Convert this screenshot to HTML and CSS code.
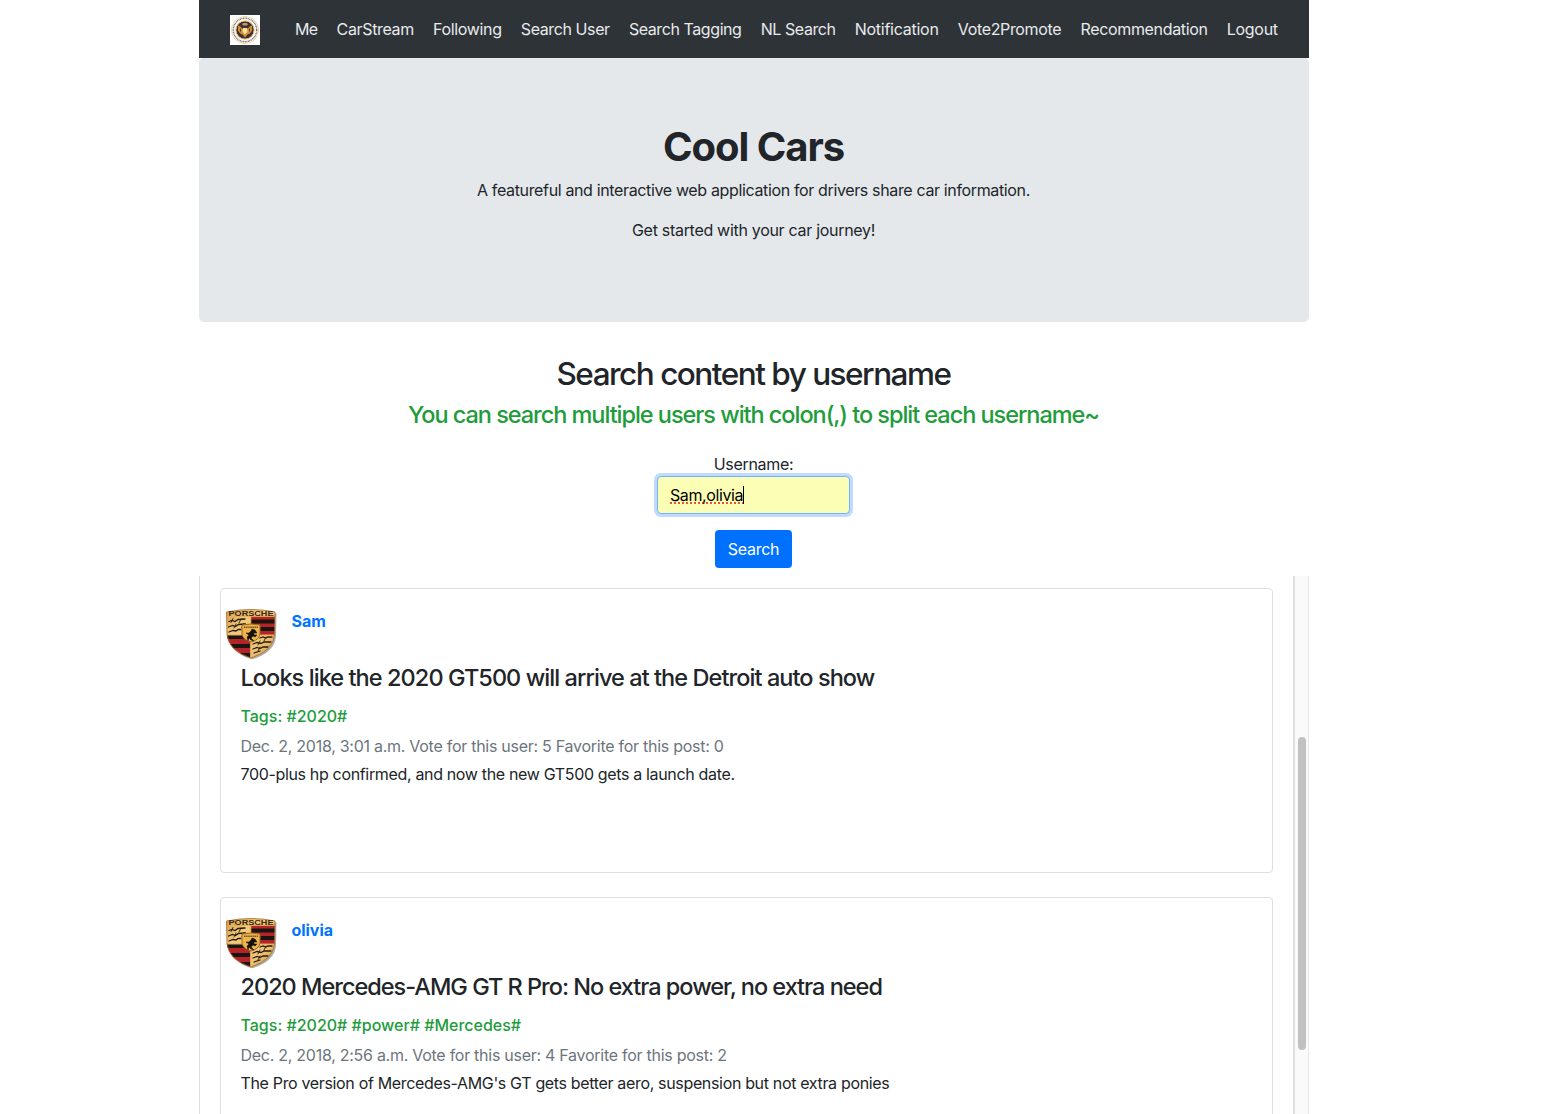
FILE: index.html
```html
<!DOCTYPE html>
<html lang="en">
<head>
<meta charset="utf-8">
<title>Cool Cars</title>
<link rel="stylesheet" href="styles.css">
</head>
<body>
<svg class="defs" aria-hidden="true">
  <defs>
    <linearGradient id="gold" x1="0" y1="0" x2="1" y2="1"><stop offset="0" stop-color="#d39a48"/><stop offset=".3" stop-color="#f0ca7c"/><stop offset=".7" stop-color="#edc47a"/><stop offset="1" stop-color="#c78a35"/></linearGradient>
    <clipPath id="shield"><path d="M.5 3Q25-2 49 3L48.500 26Q47 42 25 49Q3 42 1 26Z"/></clipPath>
    <symbol id="crest" viewBox="0 0 52 52">
      <path d="M2.500 4.500Q26 0 50.500 4.500L50 28Q48 44 26 50.300Q4 44 3 28Z" fill="#777" opacity=".6"/>
      <g clip-path="url(#shield)">
        <path fill="url(#gold)" d="M0 0h50v50H0z"/>
        <path fill="#b52227" d="M25 7.500h25V26H25zM0 26h24.500v24H0z"/>
        <path fill="#1b1511" d="M25 10.500h25v4H25zM25 18h25v4H25zM0 26h24.500v4H0zM0 35h24.500v4H0zM0 44h24.500v4H0z"/>
        <path d="M24.700 7v43M0 26h50M0 7.200h50" stroke="#e3ae58" stroke-width="1.200"/>
        <g fill="none" stroke="#2b1b0c" stroke-width="1.300" stroke-linecap="round">
          <path d="M3 12.500l3-1 3 1 3-2 7-.5M2.500 18l4-1.500 3 1 3-2 7-.5M3 23l4-1.500 3 .5 2-1.500 3 0"/>
          <path d="M34 29l3-1 3 1 2-1 4 0M27 35l4-1.500 4 1 3-1.500 7 0M27 40l4-1.500 3 1 3-1.500 5 0M28 44l3-1 3-1"/>
          <path d="M7 9.500l-2 4M15 10l-2 4M10 15l-2 4M18 14.500l-2 4M34 32l-2 4M40 28l-2 4M34 38l-2 4" stroke-width=".9"/>
        </g>
      </g>
      <path d="M.5 3Q25-2 49 3L48.500 26Q47 42 25 49Q3 42 1 26Z" fill="none" stroke="#a36b25" stroke-width=".8"/>
      <path d="M16 16Q25 14 34 16V25Q33 31 25 33Q17 31 16 25Z" fill="#edb34c" stroke="#9c6825"/>
      <path d="M18 18.200h14" stroke="#76501e" stroke-width="1.500" stroke-dasharray="1.500 .6"/>
      <path d="M26 20l3 1 2 3-3 0 0 2 3 0-2 2-2-1-2 2 3 3-3-1-2-2-1 3-1-4 2-2-3-2 3 0 2-2z" fill="#15110d" stroke="#15110d" stroke-width=".5"/>
      <text class="crest-name" x="25" y="6.600" textLength="45" lengthAdjust="spacingAndGlyphs">PORSCHE</text>
    </symbol>
  </defs>
</svg>
<div class="container">
  <nav class="navbar">
    <svg class="brand" viewBox="0 0 30 30">
      <path fill="#fff" d="M0 0h30v30H0z"/>
      <circle cx="15" cy="15" r="13.600" fill="#fffdf8" stroke="#eccb91" stroke-width=".8"/>
      <circle cx="15" cy="15" r="11.700" fill="none" stroke="#777378" stroke-width="1.500" stroke-dasharray="1 .6"/>
      <circle cx="15" cy="15" r="9.100" fill="#3b3038" stroke="#e9b75f" stroke-width="1"/>
      <path d="M8 10.500l2.500 1 2 2.500h5l2-2.500 2.500-1v5l-2 3-2.500 1-2.500 3-2.500-3-2.500-1-2-3z" fill="#d18e36"/>
      <path d="M12 9l1.500-1h3L18 9l-1 1.500h-4z" fill="#c99a53"/>
      <path d="M12.700 13h4.600v4L15 19.500 12.700 17z" fill="#ffdf92"/>
      <path d="M10.500 13.500v3M19.500 13.500v3" stroke="#5e3c2b" stroke-width="1"/>
    </svg>
    <ul class="links">
      <li class="n1">Me</li><li class="n2">CarStream</li><li class="n3">Following</li><li class="n4">Search User</li><li class="n5">Search Tagging</li><li class="n6">NL Search</li><li class="n7">Notification</li><li class="n8">Vote2Promote</li><li class="n9">Recommendation</li><li class="n10">Logout</li>
    </ul>
  </nav>
  <header class="jumbotron">
    <h1>Cool Cars</h1>
    <p class="lead">A featureful and interactive web application for drivers share car information.</p>
    <p class="start">Get started with your car journey!</p>
  </header>
  <section class="search">
    <h2>Search content by username</h2>
    <h4>You can search multiple users with colon(,) to split each username~</h4>
    <div class="label">Username:</div>
    <div class="field"><span class="typed">Sam,olivia</span><span class="caret"></span></div>
    <div class="button">Search</div>
  </section>
  <main class="feed">
    <div class="posts">
      <article class="card">
        <div class="author"><svg class="avatar"><use href="#crest"/></svg><strong class="user">Sam</strong></div>
        <h3 class="t1">Looks like the 2020 GT500 will arrive at the Detroit auto show</h3>
        <div class="tags">Tags: #2020#</div>
        <div class="meta">Dec. 2, 2018, 3:01 a.m. Vote for this user: 5 Favorite for this post: 0</div>
        <div class="text">700-plus hp confirmed, and now the new GT500 gets a launch date.</div>
      </article>
      <article class="card">
        <div class="author"><svg class="avatar"><use href="#crest"/></svg><strong class="user">olivia</strong></div>
        <h3 class="t2">2020 Mercedes-AMG GT R Pro: No extra power, no extra need</h3>
        <div class="tags">Tags: #2020# #power# #Mercedes#</div>
        <div class="meta">Dec. 2, 2018, 2:56 a.m. Vote for this user: 4 Favorite for this post: 2</div>
        <div class="text">The Pro version of Mercedes-AMG's GT gets better aero, suspension but not extra ponies</div>
      </article>
    </div>
    <div class="track"><div class="thumb"></div></div>
  </main>
</div>
</body>
</html>
```
FILE: styles.css
```css
* { box-sizing: border-box; }
body { margin: 0; height: 1114px; overflow: hidden; padding-right: 54px; background: #fff; color: #212529; font: 16px/24px Inter, "Liberation Sans", sans-serif; letter-spacing: -0.3px; white-space: nowrap; }
h1, h2, h3, h4, p, ul { margin: 0; padding: 0; }
.defs { display: block; width: 0; height: 0; }
.crest-name { font: bold 6.5px "Liberation Sans", sans-serif; letter-spacing: 0; text-anchor: middle; fill: #3a2610; }
.container { width: 1110px; height: 1114px; margin: 0 auto; display: flex; flex-direction: column; }
.navbar { height: 58px; flex: none; background: #2e3338; display: flex; align-items: center; padding: 0 31px; }
.brand { width: 30px; height: 30px; margin: 1px 35px 0 0; flex: none; }
.links { display: flex; gap: 19.2px; list-style: none; color: #e8eaec; }
.n1 { letter-spacing: -0.7px; }
.n2, .n3 { letter-spacing: -0.35px; }
.n4 { letter-spacing: -0.4px; }
.n5 { letter-spacing: -0.42px; }
.n6 { letter-spacing: -0.43px; }
.n7 { letter-spacing: -0.26px; }
.n8, .n9 { letter-spacing: -0.34px; }
.jumbotron { height: 264px; flex: none; background: #e4e8eb; border-radius: 5px; padding: 65px 1px 0 0; text-align: center; }
h1 { font-size: 40px; line-height: 48px; font-weight: 700; letter-spacing: -1.05px; }
.lead { margin-top: 7px; letter-spacing: -0.357px; }
.start { margin-top: 16px; }
.search { height: 254px; flex: none; display: flex; flex-direction: column; align-items: center; padding: 33px 1px 0 0; }
h2 { font-size: 31.5px; line-height: 38px; font-weight: 500; letter-spacing: -1.5px; }
h4 { font-size: 23.5px; line-height: 29px; font-weight: 500; letter-spacing: -1.04px; color: #219c3a; margin-top: 7px; }
.label { margin-top: 23px; }
.field { width: 193px; height: 38px; background: #faffb5; border: 1px solid #74b3fa; border-radius: 4px; box-shadow: 0 0 0 3px #bfdbff; padding: 0 12px; display: flex; align-items: center; color: #000; letter-spacing: -0.4px; }
.typed { text-decoration: underline dotted #f05030 2px; text-underline-offset: 1px; text-decoration-skip-ink: none; }
.caret { width: 1px; height: 18px; background: #000; }
.button { width: 77px; height: 38px; margin-top: 16px; border-radius: 4px; background: #0071ff; color: #fff; text-align: center; line-height: 38px; }
.feed { flex: 1; min-height: 0; display: flex; border-left: 1px solid #dedede; overflow: hidden; }
.posts { flex: 1; padding: 12px 20px 0; display: flex; flex-direction: column; gap: 24px; }
.card { height: 285px; flex: none; border: 1px solid #dfdfdf; border-radius: 4px; padding: 20px 20px 0 19.5px; }
.author { height: 54px; display: flex; margin-left: -14.5px; }
.avatar { width: 52px; height: 52px; }
.user { margin-left: 13.5px; color: #0074ff; font-weight: 650; letter-spacing: -0.05px; }
h3 { font-size: 23.5px; line-height: 29px; font-weight: 500; }
.t1 { letter-spacing: -0.93px; }
.t2 { letter-spacing: -1.01px; }
.tags { margin-top: 12px; line-height: 24px; font-weight: 500; letter-spacing: 0; color: #219c3a; }
.meta { margin-top: 6px; letter-spacing: -0.27px; color: #6c757d; }
.text { margin-top: 4px; letter-spacing: -0.34px; }
.track { width: 16px; border-left: 2px solid #dedede; border-right: 1px solid #e8e8e8; background: #fafafa; padding: 161px 0 0 3px; }
.thumb { width: 8px; height: 313px; border-radius: 4px; background: #c1c1c1; }
```
